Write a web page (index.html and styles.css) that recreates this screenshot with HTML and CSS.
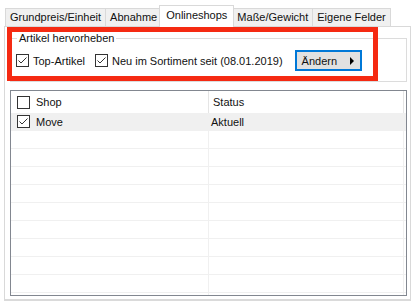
FILE: index.html
```html
<!DOCTYPE html>
<html lang="de">
<head>
  <meta charset="UTF-8">
  <title>Artikel – Onlineshops</title>
  <link rel="stylesheet" href="styles.css">
</head>
<body>
  <div class="tabs">
    <div class="tab">Grundpreis/Einheit</div>
    <div class="tab">Abnahme</div>
    <div class="tab active">Onlineshops</div>
    <div class="tab">Maße/Gewicht</div>
    <div class="tab">Eigene Felder</div>
  </div>

  <div class="panel">
    <fieldset class="group">
      <legend>Artikel hervorheben</legend>
      <label class="check">
        <svg class="box" width="13" height="13" viewBox="0 0 13 13"><rect x="0.5" y="0.5" width="12" height="12" fill="#fff" stroke="#333"/><path d="M2.5 6.5 L5 9 L10.5 3.5" fill="none" stroke="#333"/></svg>
        Top-Artikel
      </label>
      <label class="check">
        <svg class="box" width="13" height="13" viewBox="0 0 13 13"><rect x="0.5" y="0.5" width="12" height="12" fill="#fff" stroke="#333"/><path d="M2.5 6.5 L5 9 L10.5 3.5" fill="none" stroke="#333"/></svg>
        Neu im Sortiment seit (08.01.2019)
      </label>
      <button class="btn">Ändern <span class="arrow"></span></button>
    </fieldset>

    <!-- highlight frame drawn over the group box -->
    <div class="mark"></div>

    <div class="listview">
      <div class="lv-row lv-head">
        <div class="cell">
          <svg class="box" width="13" height="13" viewBox="0 0 13 13"><rect x="0.5" y="0.5" width="12" height="12" fill="#fff" stroke="#333"/></svg>
          Shop
        </div>
        <div class="cell">Status</div>
      </div>
      <div class="lv-body">
        <div class="lv-row selected">
          <div class="cell">
            <svg class="box" width="13" height="13" viewBox="0 0 13 13"><rect x="0.5" y="0.5" width="12" height="12" fill="#fff" stroke="#333"/><path d="M2.5 6.5 L5 9 L10.5 3.5" fill="none" stroke="#333"/></svg>
            Move
          </div>
          <div class="cell status">Aktuell</div>
        </div>
        <div class="lv-row"><div class="cell"></div><div class="cell"></div></div>
        <div class="lv-row"><div class="cell"></div><div class="cell"></div></div>
        <div class="lv-row"><div class="cell"></div><div class="cell"></div></div>
        <div class="lv-row"><div class="cell"></div><div class="cell"></div></div>
        <div class="lv-row"><div class="cell"></div><div class="cell"></div></div>
        <div class="lv-row"><div class="cell"></div><div class="cell"></div></div>
        <div class="lv-row"><div class="cell"></div><div class="cell"></div></div>
        <div class="lv-row"><div class="cell"></div><div class="cell"></div></div>
        <div class="lv-row"><div class="cell"></div><div class="cell"></div></div>
        <div class="lv-row"><div class="cell"></div><div class="cell"></div></div>
      </div>
    </div>
  </div>
</body>
</html>
```

FILE: styles.css
```css
body {
  margin: 0;
  background: #fff;
  color: #111;
  font-family: "Liberation Sans", Arial, sans-serif;
  font-size: 11px;
}

.tabs {
  display: flex;
  align-items: flex-end;
  height: 21px;
  margin-top: 5px;
  padding-left: 5px;
}

.tab {
  height: 18px;
  line-height: 17px;
  padding: 0 4px;
  margin-right: -1px;
  border: 1px solid #d9d9d9;
  border-bottom: none;
  background: #f0f0f0;
  box-sizing: border-box;
  white-space: nowrap;
}

.tab.active {
  position: relative;
  z-index: 1;
  height: 22px;
  line-height: 19px;
  margin: 0 -2px -1px -2px;
  padding: 0 6px;
  background: #fff;
}

.panel {
  position: relative;
  height: 275px;
  margin: 0 5px 0 4px;
  padding: 0 3px 0 5px;
  border: 1px solid #d9d9d9;
  border-bottom: 2px solid #dadada;
  box-sizing: border-box;
}

.group {
  display: flex;
  align-items: center;
  margin: 4px 0 0 0;
  padding: 5px 5px 10px 5px;
  border: 1px solid #dcdcdc;
}

.group legend {
  margin-left: 1px;
  padding: 0 2px;
  line-height: 14px;
}

.check {
  display: flex;
  align-items: center;
  gap: 4px;
  margin-right: 10px;
  white-space: nowrap;
}

.box {
  flex: none;
}

.btn {
  display: flex;
  align-items: center;
  justify-content: space-between;
  width: 67px;
  height: 21px;
  margin-left: 2px;
  padding: 0 6px 0 5px;
  border: 2px solid #0078d7;
  background: #e1e1e1;
  font: inherit;
  color: #111;
}

.arrow {
  width: 0;
  height: 0;
  border-top: 4px solid transparent;
  border-bottom: 4px solid transparent;
  border-left: 4px solid #000;
}

.mark {
  position: absolute;
  left: 2px;
  top: 0;
  width: 371px;
  height: 54px;
  border: 5px solid #f52a12;
  box-sizing: border-box;
}

.listview {
  margin-top: 8px;
  height: 206px;
  border: 1px solid #828790;
  box-sizing: border-box;
  overflow: hidden;
}

.lv-row {
  display: grid;
  grid-template-columns: 198px 195px;
  height: 17px;
  border-bottom: 1px solid #f0f0f0;
}

.lv-row .cell {
  display: flex;
  align-items: center;
  gap: 6px;
  padding-left: 6px;
  border-right: 1px solid #f0f0f0;
  white-space: nowrap;
}

.lv-head {
  height: 22px;
  border-bottom: none;
}

.lv-head .cell {
  border-right-color: #e5e5e5;
}

.lv-head .cell + .cell {
  padding-left: 4px;
}

.lv-body {
  height: 182px;
}

.lv-row.selected {
  background: #f0f0f0;
}

.cell.status {
  padding-left: 2px;
}
```
